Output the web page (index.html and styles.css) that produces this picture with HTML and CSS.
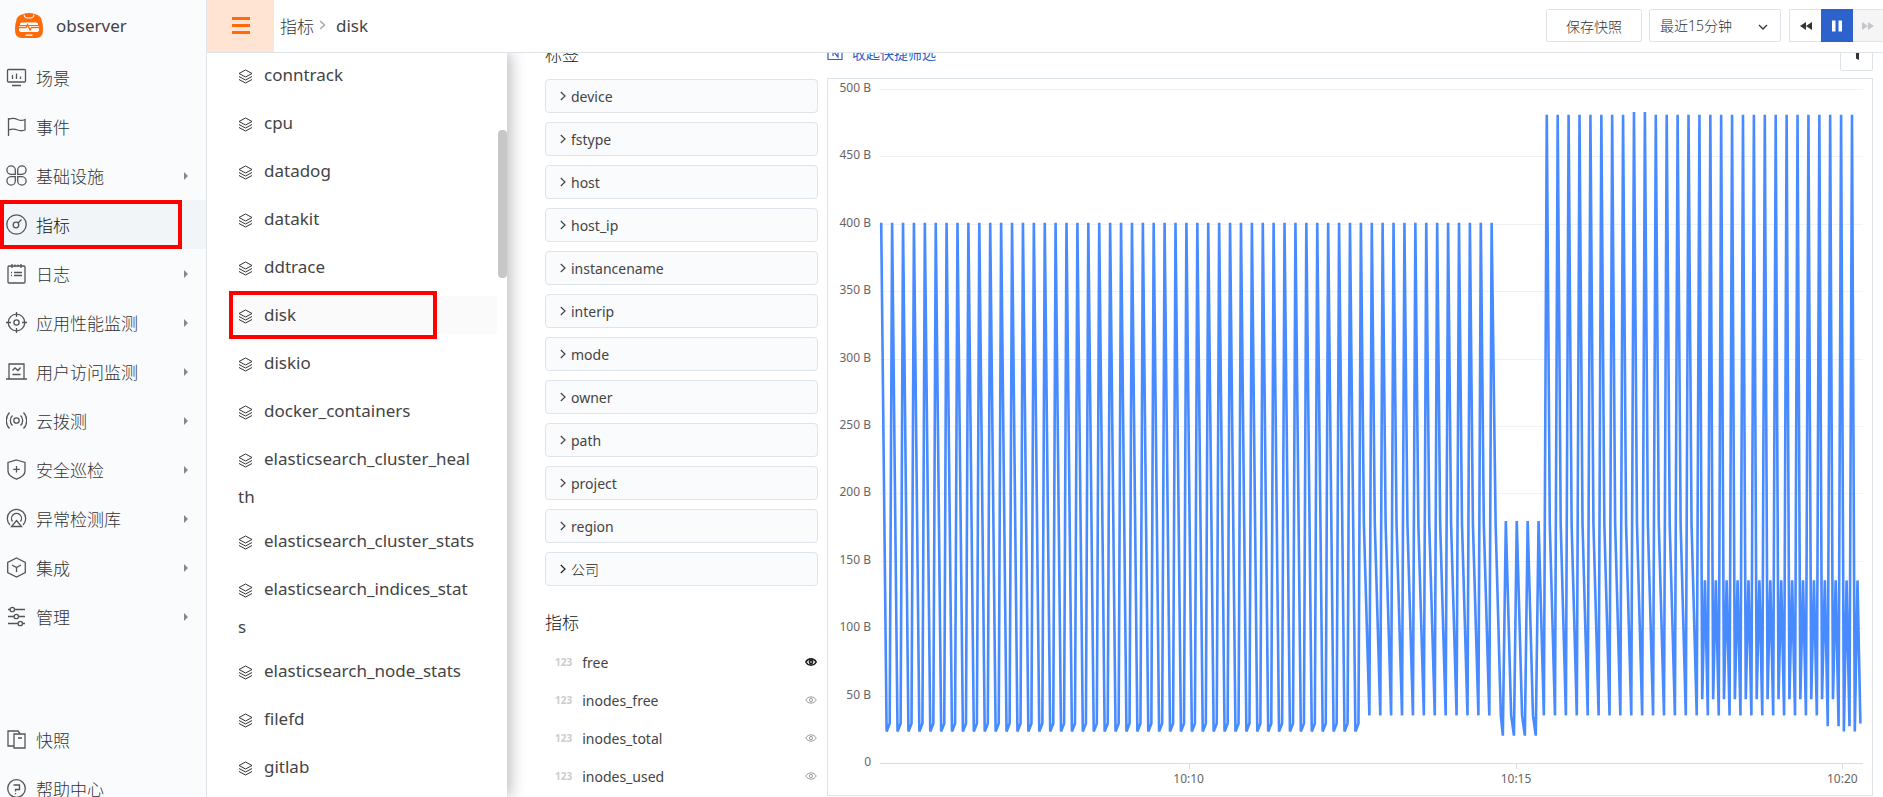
FILE: index.html
```html
<!DOCTYPE html>
<html lang="zh-CN">
<head>
<meta charset="utf-8">
<title>指标 - disk</title>
<link rel="stylesheet" href="styles.css">
</head>
<body>
<svg class="defs" width="0" height="0" aria-hidden="true">
  <symbol id="layers" viewBox="0 0 15 15"><path d="M7.500 1 14 4.500 7.500 8 1 4.500ZM1 7.500 7.500 11 14 7.500M1 10.500 7.500 14 14 10.500"/></symbol>
  <symbol id="chev" viewBox="0 0 6 10"><path d="M.8 1 5 5 .8 9"/></symbol>
  <symbol id="eye" viewBox="0 0 12 10"><path d="M.8 5C3 .8 9 .8 11.200 5 9 9.200 3 9.200.8 5Z"/><circle cx="6" cy="5" r="1.600"/></symbol>
</svg>
<div class="app">
  <aside class="sidebar">
    <div class="brand">
      <svg class="logo" viewBox="0 0 28 25"><path fill="#ff6a0a" d="M8 1Q14-1 20 1q7 2 7 8 1 2 1 8 0 8-7 8H7q-7 0-7-8 0-6 1-8 0-6 7-8Z"/><path fill="none" stroke="#fff" stroke-width="1" d="M9 1.500q0 3.500 3 3.500h4q3 0 3-3.500"/><path fill="#fff" d="M5 11q0-1.500 2-1.500h14q2 0 2 1.500v1H5ZM4 13h20v4q0 2-3 2H7q-3 0-3-2ZM10.500 21.500h7v1.300h-7Z"/><path fill="none" stroke="#ff6a0a" stroke-width="1.300" d="M4 14.500h7l1.500-3L15 17l1.500-2.500H24"/></svg>
      <span>observer</span>
    </div>
    <nav class="nav">
      <a href="#"><svg viewBox="0 0 21 21"><rect x="1.500" y="2.500" width="18" height="12.500" rx="1"/><path d="M6.500 8v4M10.500 6.500V12M14.500 9.500V12M6 18.500h9"/></svg><span>场景</span></a>
      <a href="#"><svg viewBox="0 0 21 21"><path d="M2.500 2v18M2.500 3.500c4-2 7-1 9 0s5 1.200 7.500 0v10.500c-3 1.200-5 1-7.500 0s-5-1.500-9 0"/></svg><span>事件</span></a>
      <a href="#"><svg viewBox="0 0 21 21"><path d="M9.300 9.300H5a4.200 4.200 0 1 1 4.300-4.200ZM11.700 9.300H16a4.200 4.200 0 1 0-4.300-4.200ZM9.300 11.700H5a4.200 4.200 0 1 0 4.300 4.200ZM11.700 11.700H16a4.200 4.200 0 1 1-4.300 4.200Z"/></svg><span>基础设施</span><i class="arrow"></i></a>
      <a href="#" class="active"><svg viewBox="0 0 21 21"><circle cx="10.500" cy="10.500" r="9.700"/><circle cx="10" cy="11" r="2.800"/><path d="m12 9 3.500-3.500"/></svg><span>指标</span></a>
      <a href="#"><svg viewBox="0 0 21 21"><rect x="2" y="3" width="17" height="17" rx="1"/><path d="M6 1v4M15 1v4M9 1.500v2M12 1.500v2M5 9.500h1M8 9.500h8M5 12.500h1M8 12.500h8"/></svg><span>日志</span><i class="arrow"></i></a>
      <a href="#"><svg viewBox="0 0 21 21"><circle cx="10.500" cy="10.500" r="8.300"/><circle cx="10.500" cy="10.500" r="2.600"/><path d="M10.500 0v5M10.500 16v5M0 10.500h5M16 10.500h5"/></svg><span>应用性能监测</span><i class="arrow"></i></a>
      <a href="#"><svg viewBox="0 0 21 21"><path d="M3 17.500V3h15v14.500M0 18h21M6.500 9.500 9 7l3 2.500 2.500-3M6.500 13.500h8"/></svg><span>用户访问监测</span><i class="arrow"></i></a>
      <a href="#"><svg viewBox="0 0 21 21"><circle cx="10.500" cy="10.500" r="2.700"/><path d="M6.500 5.500a6.800 6.800 0 0 0 0 10M14.500 5.500a6.800 6.800 0 0 1 0 10M3.500 2.500a11.500 11.500 0 0 0 0 16M17.500 2.500a11.500 11.500 0 0 1 0 16"/></svg><span>云拨测</span><i class="arrow"></i></a>
      <a href="#"><svg viewBox="0 0 21 21"><path d="M10.500 1 19 3.500V12c0 4-4 6.500-8.500 8.200C6 18.500 2 16 2 12V3.500ZM10.500 7v6.500M7.200 10.300h6.600"/></svg><span>安全巡检</span><i class="arrow"></i></a>
      <a href="#"><svg viewBox="0 0 21 21"><path d="M4 17a9.200 9.200 0 1 1 13 0M6.500 13.500a5 5 0 1 1 8 0M10.500 12.500l5 6h-10Z"/></svg><span>异常检测库</span><i class="arrow"></i></a>
      <a href="#"><svg viewBox="0 0 21 21"><path d="m10.500 1 8.800 4.500v10l-8.800 4.500-8.800-4.500v-10ZM6 8l4.500 2.500L15 8M10.500 10.500v4.500"/></svg><span>集成</span><i class="arrow"></i></a>
      <a href="#"><svg viewBox="0 0 21 21"><path d="M2 3.500h2M8.500 3.500H19M2 10.500h6M12.500 10.500H19M2 17.500h10M16.500 17.500H19"/><circle cx="6.300" cy="3.500" r="2.200"/><circle cx="10.300" cy="10.500" r="2.200"/><circle cx="14.300" cy="17.500" r="2.200"/></svg><span>管理</span><i class="arrow"></i></a>
    </nav>
    <nav class="nav nav-foot">
      <a href="#"><svg viewBox="0 0 21 21"><path d="M8 17H2V2h10l2 2.500M8 5h7l4 0v14H8ZM12 9h4"/></svg><span>快照</span></a>
      <a href="#"><svg viewBox="0 0 21 21"><circle cx="10.500" cy="10.500" r="8.800"/><path d="M7.500 7h6v4.500h-4v2M9.500 15v1.200"/></svg><span>帮助中心</span></a>
    </nav>
  </aside>
  <div class="main">
    <header class="topbar">
      <button class="burger" aria-label="菜单"><i></i><i></i><i></i></button>
      <div class="crumbs"><a href="#">指标</a><svg viewBox="0 0 6 10"><use href="#chev"/></svg><span>disk</span></div>
      <button class="btn save">保存快照</button>
      <div class="range"><select aria-label="时间范围"><option>最近15分钟</option></select><svg viewBox="0 0 10 6"><path d="m1 1 4 4 4-4"/></svg></div>
      <div class="player">
        <button aria-label="后退"><svg viewBox="0 0 14 10"><path d="M7 1v8L1 5ZM13 1v8L7 5Z"/></svg></button>
        <button class="on" aria-label="暂停"><svg viewBox="0 0 14 12"><path d="M2 .5h3.500v11H2ZM8.500.5H12v11H8.500Z"/></svg></button>
        <button class="off" aria-label="前进" disabled><svg viewBox="0 0 14 10"><path d="M1 1v8l6-4ZM7 1v8l6-4Z"/></svg></button>
      </div>
    </header>
    <div class="body">
      <section class="sets">
        <ul>
          <li><a href="#"><svg><use href="#layers"/></svg>conntrack</a></li>
          <li><a href="#"><svg><use href="#layers"/></svg>cpu</a></li>
          <li><a href="#"><svg><use href="#layers"/></svg>datadog</a></li>
          <li><a href="#"><svg><use href="#layers"/></svg>datakit</a></li>
          <li><a href="#"><svg><use href="#layers"/></svg>ddtrace</a></li>
          <li class="current"><a href="#"><svg><use href="#layers"/></svg>disk</a></li>
          <li><a href="#"><svg><use href="#layers"/></svg>diskio</a></li>
          <li><a href="#"><svg><use href="#layers"/></svg>docker_containers</a></li>
          <li class="long"><a href="#"><svg><use href="#layers"/></svg>elasticsearch_cluster_health</a></li>
          <li><a href="#"><svg><use href="#layers"/></svg>elasticsearch_cluster_stats</a></li>
          <li class="long"><a href="#"><svg><use href="#layers"/></svg>elasticsearch_indices_stats</a></li>
          <li><a href="#"><svg><use href="#layers"/></svg>elasticsearch_node_stats</a></li>
          <li><a href="#"><svg><use href="#layers"/></svg>filefd</a></li>
          <li><a href="#"><svg><use href="#layers"/></svg>gitlab</a></li>
        </ul>
        <i class="thumb"></i>
      </section>
      <section class="filters">
        <h2>标签</h2>
        <div class="tags">
          <button><svg><use href="#chev"/></svg>device</button>
          <button><svg><use href="#chev"/></svg>fstype</button>
          <button><svg><use href="#chev"/></svg>host</button>
          <button><svg><use href="#chev"/></svg>host_ip</button>
          <button><svg><use href="#chev"/></svg>instancename</button>
          <button><svg><use href="#chev"/></svg>interip</button>
          <button><svg><use href="#chev"/></svg>mode</button>
          <button><svg><use href="#chev"/></svg>owner</button>
          <button><svg><use href="#chev"/></svg>path</button>
          <button><svg><use href="#chev"/></svg>project</button>
          <button><svg><use href="#chev"/></svg>region</button>
          <button class="zh"><svg><use href="#chev"/></svg>公司</button>
        </div>
        <h2 class="second">指标</h2>
        <ul class="metrics">
          <li><b>123</b><span>free</span><button class="shown" aria-label="显示 free"><svg><use href="#eye"/></svg></button></li>
          <li><b>123</b><span>inodes_free</span><button aria-label="显示 inodes_free"><svg><use href="#eye"/></svg></button></li>
          <li><b>123</b><span>inodes_total</span><button aria-label="显示 inodes_total"><svg><use href="#eye"/></svg></button></li>
          <li><b>123</b><span>inodes_used</span><button aria-label="显示 inodes_used"><svg><use href="#eye"/></svg></button></li>
        </ul>
      </section>
      <section class="view">
        <div class="tools">
          <a href="#"><svg viewBox="0 0 16 16"><path d="M1 3v11.500h14V3h-3M1 3h3M6 3v8M6 6l5 6V5"/></svg>收起快捷筛选</a>
          <button class="btn funnel" aria-label="筛选"><svg viewBox="0 0 14 14"><path d="M1 1h12L9 6.500V13l-3-1.500v-5Z"/></svg></button>
        </div>
        <div class="card">
          <div class="yaxis"><span>500 B</span><span>450 B</span><span>400 B</span><span>350 B</span><span>300 B</span><span>250 B</span><span>200 B</span><span>150 B</span><span>100 B</span><span>50 B</span><span>0</span></div>
          <div class="plot">
            <i></i><i></i><i></i><i></i><i></i><i></i><i></i><i></i><i></i><i></i><i></i>
            <svg viewBox="0 0 982 500" preserveAspectRatio="none"><path id="series"/></svg>
            <div class="xtick" style="left:31.4%">10:10</div>
            <div class="xtick" style="left:64.7%">10:15</div>
            <div class="xtick" style="left:97.9%">10:20</div>
          </div>
        </div>
      </section>
    </div>
  </div>
</div>
<script src="chart.js"></script>
</body>
</html>
```
FILE: styles.css
```css
* { box-sizing: border-box; }
body { margin: 0; font: 300 14px "Noto Sans", "Noto Sans CJK SC", sans-serif; color: #333; background: #fff; }
a { color: inherit; text-decoration: none; }
ul { list-style: none; margin: 0; padding: 0; }
button, select { font: inherit; color: inherit; }
button { padding: 0; border: 0; background: none; display: flex; align-items: center; justify-content: center; }
svg { fill: none; stroke: currentColor; flex: none; }
.defs { position: absolute; }
.app { display: flex; height: 100vh; overflow: hidden; }

.sidebar { width: 207px; flex: none; background: #fafbfd; border-right: 1px solid #dfe3ea; display: flex; flex-direction: column; }
.brand { height: 53px; flex: none; display: flex; align-items: center; gap: 13px; padding: 0 0 2px 15px; font-size: 17px; font-weight: 400; color: #444; }
.logo { width: 28px; height: 25px; stroke: none; }
.nav { flex: none; font-size: 17px; color: #333; }
.nav a { height: 49px; display: flex; align-items: center; gap: 9px; padding: 0 18px 0 6px; position: relative; }
.nav svg { width: 21px; height: 21px; stroke-width: 1.3; color: #555; }
.nav span { flex: 1; }
.nav-foot { margin-top: 74px; }
.arrow { border-left: 4px solid #888; border-top: 4px solid transparent; border-bottom: 4px solid transparent; }
.nav .active { background: #f1f5f8; color: #111; }
.nav .active::after { content: ""; position: absolute; inset: 0 24px 0 0; border: 4px solid #f00; }

.main { flex: 1; min-width: 0; display: flex; flex-direction: column; }
.topbar { height: 53px; flex: none; display: flex; align-items: flex-start; border-bottom: 1px solid #dfe3ea; }
.burger { width: 67px; height: 52px; background: #ffe3d3; flex-direction: column; gap: 4px; padding-bottom: 2px; }
.burger i { width: 18px; height: 3px; background: #ff6a0a; }
.crumbs { flex: 1; height: 50px; display: flex; align-items: center; padding-left: 6px; font-size: 17px; }
.crumbs span { font-weight: 400; color: #444; }
.crumbs svg { width: 7px; height: 10px; color: #aaa; margin: 0 10px 0 5px; stroke-width: 1.5; }
.btn { border: 1px solid #dfe3ea; border-radius: 2px; background: #fff; }
.save { width: 96px; height: 33px; margin: 9px 7px 0 0; }
.range { position: relative; width: 132px; margin: 9px 8px 0 0; }
.range select { width: 100%; height: 33px; padding: 0 10px; border: 1px solid #dfe3ea; border-radius: 2px; appearance: none; background: #fff; }
.range svg { position: absolute; right: 13px; top: 15px; width: 10px; height: 6px; stroke-width: 1.3; }
.player { display: flex; border: 1px solid #dfe3ea; border-right: 0; border-radius: 2px 0 0 2px; height: 33px; margin-top: 9px; }
.player button { width: 31px; }
.player svg { width: 14px; fill: currentColor; stroke: none; }
.player .on { width: 32px; background: #2d61cc; color: #fff; margin: -1px 0; }
.player .off { width: 30px; background: #f5f5f5; color: #c4c8ce; }

.body { flex: 1; min-height: 0; display: flex; }
.sets { position: relative; width: 300px; flex: none; padding: 3px 10px 0 25px; font-size: 17px; font-weight: 400; color: #444; z-index: 1; box-shadow: 4px 0 14px rgba(0, 0, 0, .25); clip-path: inset(0 -20px 0 0); }
.sets li { position: relative; line-height: 38px; padding: 0 22px 0 6px; margin-bottom: 10px; word-break: break-all; }
.sets .long { margin-bottom: 6px; }
.sets svg { width: 15px; height: 15px; margin-right: 11px; vertical-align: -3px; stroke-width: 1; color: #333; }
.sets .current { background: #fafafa; border-radius: 3px; }
.current::after { content: ""; position: absolute; inset: -5px 60px -5px -3px; border: 4px solid #f00; }
.thumb { position: absolute; right: 0; top: 77px; width: 9px; height: 148px; border-radius: 4px; background: #c7c7c7; }

.filters { width: 312px; flex: none; padding: 0 1px 0 38px; overflow: hidden; }
h2 { margin: 0; font-size: 17px; font-weight: 300; line-height: 24px; margin-top: -10px; color: #111; }
.tags { display: flex; flex-direction: column; gap: 9px; margin-top: 12px; }
.tags button { height: 34px; justify-content: flex-start; gap: 5px; padding: 0 0 0 14px; background: #fafbfd; border: 1px solid #dfe3ea; border-radius: 4px; font-weight: 400; color: #444; }
.tags .zh { font-weight: 300; color: #222; }
.tags svg { width: 6px; height: 10px; stroke-width: 1.2; }
.second { margin-top: 25px; }
.metrics { margin-top: 8px; }
.metrics li { height: 38px; display: flex; align-items: center; gap: 10px; padding: 0 1px 0 10px; }
.metrics b { font-size: 10px; font-weight: 700; color: #ccc; }
.metrics span { flex: 1; font-weight: 400; color: #444; }
.metrics button { color: #999; }
.metrics svg { width: 12px; height: 10px; stroke-width: 1; }
.metrics .shown { color: #222; }
.metrics .shown svg { stroke-width: 1.6; }

.view { flex: 1; min-width: 0; padding: 0 10px 1px 8px; display: flex; flex-direction: column; overflow: hidden; }
.tools { height: 33px; flex: none; margin: -15px 0 7px; display: flex; align-items: center; justify-content: space-between; color: #2d61cc; }
.tools a { display: flex; align-items: center; gap: 9px; padding-bottom: 4px; font-weight: 400; }
.tools a svg { width: 16px; height: 16px; stroke-width: 1.2; }
.funnel { width: 33px; height: 33px; color: #333; padding-bottom: 2px; }
.funnel svg { width: 14px; height: 14px; fill: currentColor; stroke: none; }
.card { flex: 1; min-height: 0; border: 1px solid #dfe3ea; display: flex; gap: 9px; padding: 0 9px 0 10px; font-size: 12px; font-weight: 400; color: #666; }
.yaxis { width: 33px; display: flex; flex-direction: column; justify-content: space-between; text-align: right; margin: 1px 0 25px; line-height: 16px; white-space: nowrap; }
.plot { position: relative; flex: 1; display: flex; flex-direction: column; justify-content: space-between; margin: 10px 0 31px; }
.plot i { height: 1px; background: #f2f2f4; }
.plot i:nth-of-type(11) { background: #d9dce0; }
.plot svg { position: absolute; inset: 0; width: 100%; height: 100%; overflow: visible; }
.plot path { stroke: #488aff; stroke-width: 2.6; vector-effect: non-scaling-stroke; stroke-linejoin: bevel; }
.xtick { position: absolute; top: 100%; width: 60px; margin-left: -30px; text-align: center; line-height: 16px; padding-top: 7px; }
.xtick::before { content: ""; position: absolute; left: 30px; top: 0; width: 1px; height: 5px; background: #d9dce0; }
```
FILE: chart.js
```js
// Points are [x, bytes]; one sampling cycle (10 s) spans `step` units.
const step = 10.89;
const points = [];
const add = (x, v) => points.push([x, v]);

for (let k = 0; k <= 56; k++) {
  const x = 1.2 + k * step;
  add(x, 401);
  if (k < 44) {
    add(x + 5.4, 24);
    add(x + 8.5, 30);
  } else if (k < 56) {
    add(x + 3, 178);
    add(x + 8.5, 36);
  }
}
add(615, 178);
add(620.2, 36);
add(622.2, 21);
for (let k = 0; k < 4; k++) {
  const x = 625.2 + k * step;
  add(x, 180);
  add(x + 5.3, 36);
  if (k < 3) add(x + 8.1, 21);
}
for (let k = 0; k < 29; k++) {
  const x = 666.1 + k * step;
  add(x, k === 8 || k === 9 ? 483 : 481);
  if (k < 14) {
    add(x + 3, 178);
    add(x + 8.2, 36);
  } else {
    add(x + 2.8, k > 26 ? 24 : 48);
    add(x + 5.5, 136);
    add(x + 8.4, k === 28 ? 30 : k > 24 ? 28 : 36);
  }
}
document.getElementById("series").setAttribute(
  "d", "M" + points.map(([x, v]) => x.toFixed(1) + " " + (500 - v)).join("L"));
```
